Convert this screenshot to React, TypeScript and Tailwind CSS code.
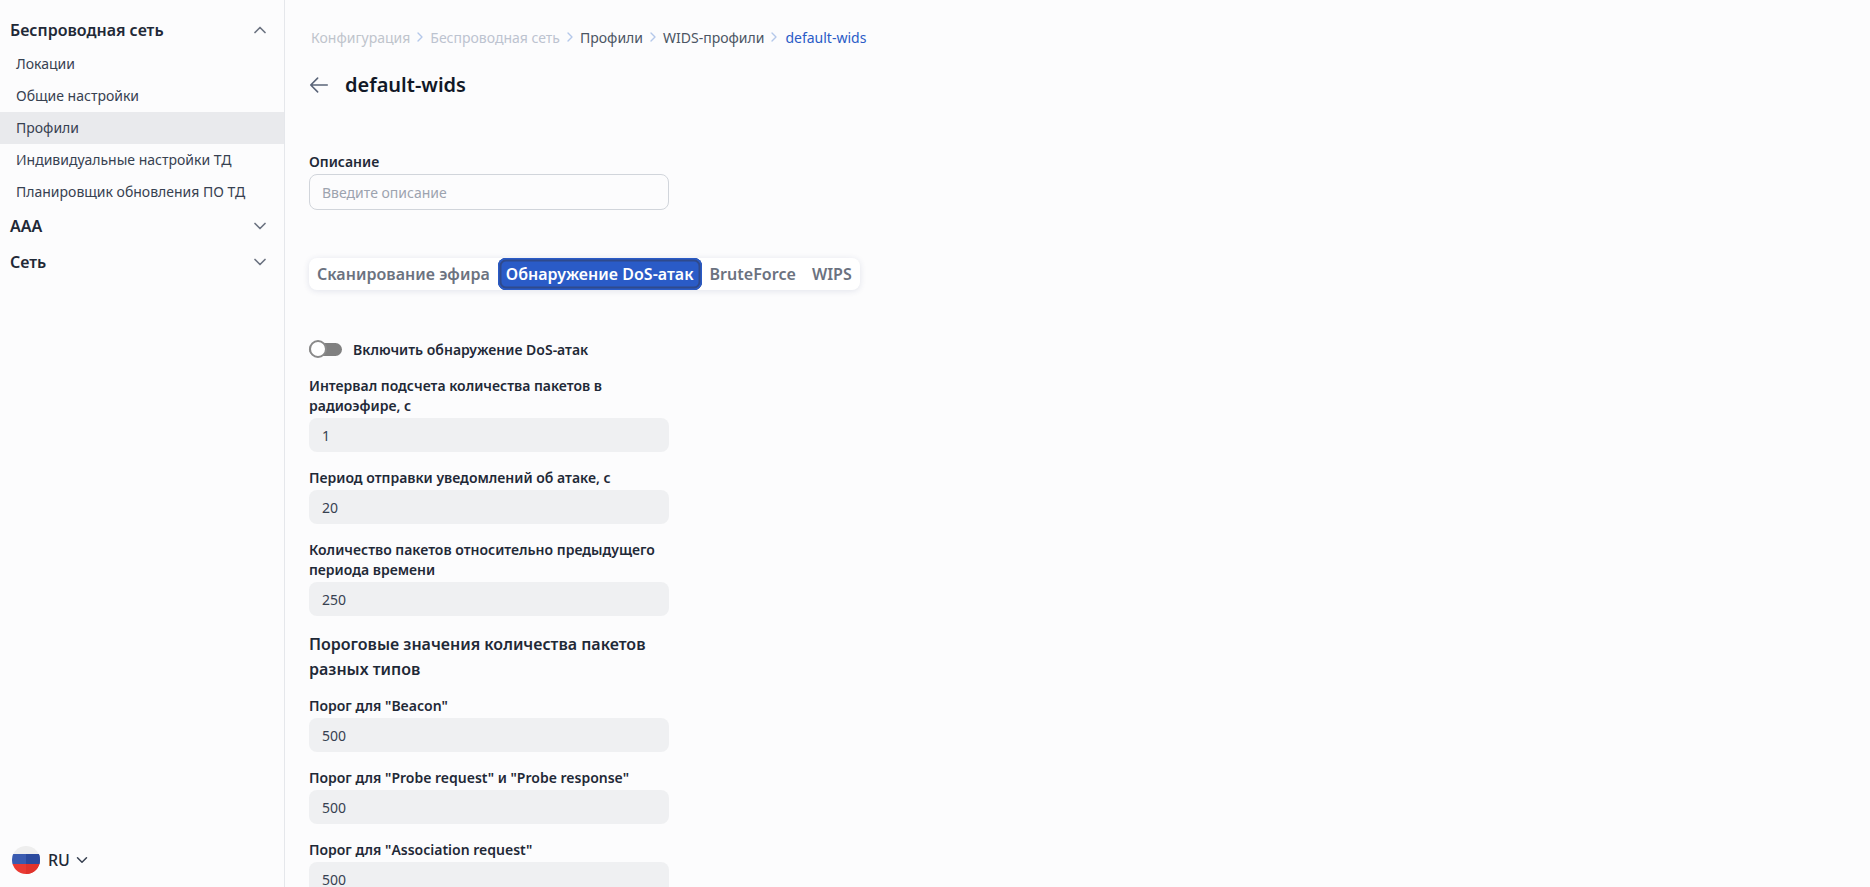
import { ChevronDown, ChevronRight, ChevronUp } from 'lucide-react';

const subItems = ['Локации', 'Общие настройки', 'Профили', 'Индивидуальные настройки ТД', 'Планировщик обновления ПО ТД'];
const tabs = ['Сканирование эфира', 'Обнаружение DoS-атак', 'BruteForce', 'WIPS'];

function Field({ label, value, className = '' }: { label: string; value: string; className?: string }) {
  return (
    <div className={className}>
      <label className="block pt-px text-[14px] leading-5 font-semibold text-[#1f2937]">{label}</label>
      <div className="h-[34px] mt-[2px] px-[13px] flex items-center bg-[#eff0f2] rounded-lg text-[14px] text-[#374151]">{value}</div>
    </div>
  );
}

function Flag() {
  return (
    <svg width="28" height="28" viewBox="0 0 28 28" className="shrink-0">
      <clipPath id="flag"><circle cx="14" cy="14" r="14" /></clipPath>
      <g clipPath="url(#flag)">
        <rect width="28" height="8" fill="#eeeeee" />
        <rect y="8" width="28" height="10" fill="#3a5bb0" />
        <rect x="14" y="8" width="14" height="10" fill="#2b4a9e" />
        <rect y="18" width="28" height="10" fill="#ea3a33" />
        <rect x="14" y="18" width="14" height="10" fill="#e0332c" />
      </g>
    </svg>
  );
}

function Crumb({ className = '' }: { className?: string }) {
  return <ChevronRight className={`w-4 h-4 text-[#b4c8ea] ${className}`} />;
}

export default function App() {
  return (
    <div className="h-[887px] overflow-hidden flex bg-[#fcfcfd] font-['Noto_Sans',sans-serif]">
      <aside className="w-[285px] shrink-0 border-r border-[#e5e7eb] flex flex-col justify-between">
        <nav className="pt-[13px]">
          <div className="h-[35px] pb-px pl-[10px] pr-[14px] flex items-center justify-between">
            <span className="text-[16px] font-semibold text-[#1f2937]">Беспроводная сеть</span>
            <ChevronUp className="w-5 h-5 text-[#6b7280]" />
          </div>
          {subItems.map(item => (
            <div key={item} className={`h-8 pb-px pl-4 flex items-center text-[14px] text-[#374151] ${item === 'Профили' ? 'bg-[#e9eaed]' : ''}`}>
              {item}
            </div>
          ))}
          <div className="h-9 pl-[10px] pr-[14px] flex items-center justify-between">
            <span className="text-[16px] font-semibold text-[#1f2937]">ААА</span>
            <ChevronDown className="w-5 h-5 text-[#6b7280]" />
          </div>
          <div className="h-9 pl-[10px] pr-[14px] flex items-center justify-between">
            <span className="text-[16px] font-semibold text-[#1f2937]">Сеть</span>
            <ChevronDown className="w-5 h-5 text-[#6b7280]" />
          </div>
        </nav>
        <div className="pl-3 pb-[13px] flex items-center gap-2">
          <Flag />
          <span className="text-[16px] font-medium text-[#1f2937]">RU</span>
          <ChevronDown className="w-[18px] h-[18px] -ml-[5px] text-[#374151]" />
        </div>
      </aside>

      <main className="flex-1 min-w-0 pl-6 pt-[28px]">
        <div className="h-5 -mt-px pl-[2px] flex items-center gap-[2px] text-[14px]">
          <span className="text-[#bfc4cc]">Конфигурация</span>
          <Crumb />
          <span className="text-[#bcc3d0]">Беспроводная сеть</span>
          <Crumb />
          <span className="text-[#4b5563]">Профили</span>
          <Crumb />
          <span className="text-[#4b5563]">WIDS-профили</span>
          <Crumb className="mr-[1px]" />
          <span className="text-[#2a5bc7]">default-wids</span>
        </div>

        <div className="mt-5 h-9 flex items-center gap-[15px]">
          <svg width="22" height="22" viewBox="0 0 24 24" fill="none" stroke="#5a6478" strokeWidth="1.75" strokeLinecap="round" strokeLinejoin="round" className="-ml-px shrink-0">
            <path d="M10.5 19.5 3 12m0 0 7.5-7.5M3 12h18" />
          </svg>
          <h1 className="text-[20px] font-semibold text-[#111827]">default-wids</h1>
        </div>

        <div className="mt-[49px] w-[360px]">
          <label className="block text-[14px] leading-5 font-semibold text-[#1f2937]">Описание</label>
          <div className="h-9 mt-[2px] px-3 flex items-center border border-[#d1d5db] rounded-lg text-[14px] text-[#9ca3af]">Введите описание</div>
        </div>

        <div className="mt-[48px] w-fit h-8 flex items-center bg-white rounded-lg shadow-[0_1px_6px_rgba(30,50,110,0.12)]">
          {tabs.map(tab => (
            <div
              key={tab}
              className={tab === 'Обнаружение DoS-атак'
                ? 'h-8 px-2 flex items-center rounded-lg bg-[#2a5bc7] shadow-[inset_0_0_0_1.5px_#2a5bc7,inset_0_0_0_3.5px_#2f4a8c] text-white text-[16px] font-semibold tracking-[0.03px]'
                : 'h-8 px-2 flex items-center text-[16px] font-semibold tracking-[0.03px] text-[#6b7280]'}
            >
              {tab}
            </div>
          ))}
        </div>

        <div className="mt-[49px] w-[360px]">
          <div className="h-5 flex items-center gap-[11px]">
            <span className="relative w-[33px] h-[13px] rounded-full bg-[#808080]">
              <span className="absolute left-0 -top-[3px] w-[18px] h-[18px] rounded-full bg-white border-2 border-[#8a8a8a]" />
            </span>
            <span className="text-[14px] font-semibold text-[#1f2937]">Включить обнаружение DoS-атак</span>
          </div>

          <Field className="mt-4" label="Интервал подсчета количества пакетов в радиоэфире, с" value="1" />
          <Field className="mt-[15px]" label="Период отправки уведомлений об атаке, с" value="20" />
          <Field className="mt-[15px]" label="Количество пакетов относительно предыдущего периода времени" value="250" />

          <h2 className="mt-4 text-[16px] leading-[25px] font-semibold text-[#1f2937]">Пороговые значения количества пакетов разных типов</h2>

          <Field className="mt-[13px]" label='Порог для "Beacon"' value="500" />
          <Field className="mt-[15px]" label='Порог для "Probe request" и "Probe response"' value="500" />
          <Field className="mt-[15px]" label='Порог для "Association request"' value="500" />
        </div>
      </main>
    </div>
  );
}
